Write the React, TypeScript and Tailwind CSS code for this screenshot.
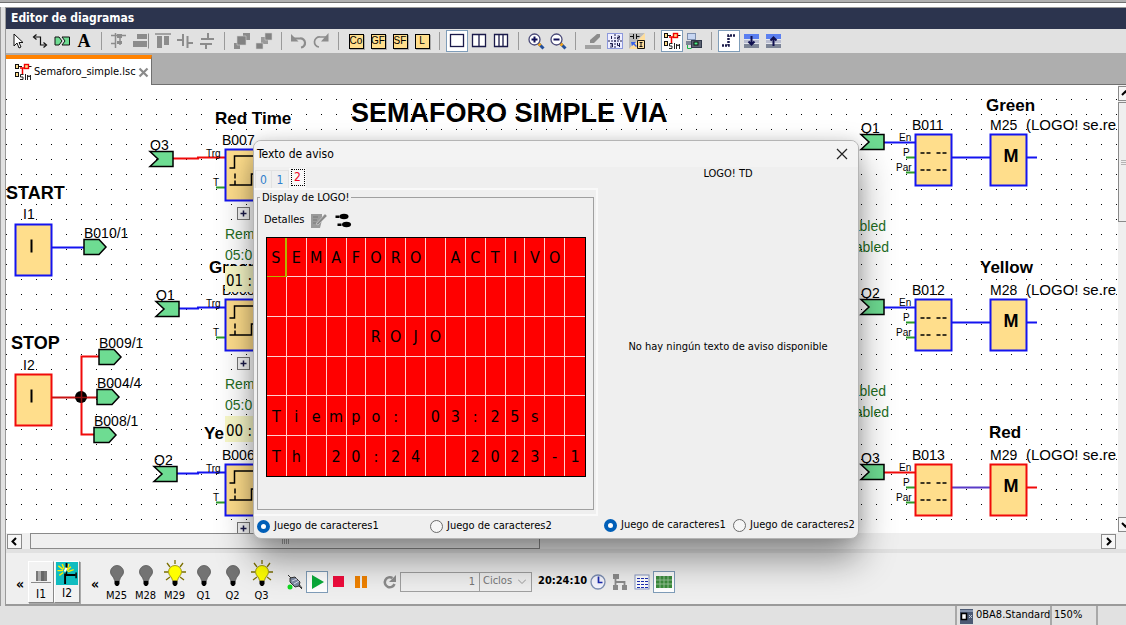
import type { ReactNode } from 'react';

const INK = '#1a1a4a';
const GREY = '#8c8c8c';

function Icon({ size = 18, children }: { size?: number; children: ReactNode }) {
  return (
    <svg width={size} height={size} viewBox={`0 0 ${size} ${size}`} fill="none" aria-hidden="true" className="shrink-0">
      {children}
    </svg>
  );
}

function Tool({ label, active = false, children }: { label: string; active?: boolean; children: ReactNode }) {
  return (
    <button
      type="button"
      aria-label={label}
      aria-pressed={active}
      className={
        active
          ? 'flex h-[22px] w-[22px] shrink-0 items-center justify-center border border-[#7f9db9] bg-white'
          : 'flex h-[22px] w-[22px] shrink-0 items-center justify-center'
      }
    >
      {children}
    </button>
  );
}

function Separator() {
  return (
    <div className="flex w-[13px] shrink-0 justify-center">
      <div className="h-[18px] w-px bg-[#9a9a9a]" />
    </div>
  );
}

function SimIcon() {
  return (
    <Icon>
      <path d="M5 3.500h3M14.500 3.500h3" stroke="#111" />
      <path d="M6 5h5M8.500 5v6" stroke="#f00000" strokeWidth="1.500" />
      <rect x="1.500" y="1.500" width="3" height="4" fill="#ffde8c" stroke="#111" />
      <rect x="10.500" y="1.500" width="4" height="4" fill="#ffde8c" stroke="#f00000" strokeWidth="1.400" />
      <rect x="1.500" y="9.500" width="3" height="4" fill="#ffde8c" stroke="#111" />
      <path d="M9.500 11.500H6.500v2.500h2.500v2.500H6M11.500 11v6M13.500 17v-5l1.500 2 1.500-2v5" stroke="#222" />
    </Icon>
  );
}

function LetterBox({ text }: { text: string }) {
  return (
    <span className="flex h-[15px] w-[15px] items-center justify-center border border-black bg-[#ffde8c] font-['Liberation_Sans',sans-serif] text-[10px] leading-none shadow-[1px_1px_0_#aaa]">
      {text}
    </span>
  );
}

function Arrange({ raised }: { raised: boolean }) {
  return (
    <Icon>
      {raised ? (
        <>
          <path d="M10 1h7v7h-7zM1 11h6v6H1z" fill={GREY} />
          <path d="M4 4h9v9H4z" fill="#828282" stroke="#d0d0d0" strokeWidth="0.600" />
        </>
      ) : (
        <>
          <path d="M6 5h7v7H6z" fill="#9a9a9a" />
          <path d="M10 1h7v7h-7zM1 11h7v6H1z" fill="#828282" stroke="#d0d0d0" strokeWidth="0.600" />
        </>
      )}
    </Icon>
  );
}

function Zoomer({ plus }: { plus: boolean }) {
  return (
    <Icon>
      <path d="M11.500 11.500l5 5" stroke="#24509a" strokeWidth="3" />
      <path d="M11 11l2.500 2.500" stroke="#f2a51c" strokeWidth="3" />
      <circle cx="7.500" cy="7.500" r="5.500" fill="#fff" stroke="#4a4a78" strokeWidth="1.300" />
      <path d={plus ? 'M4.500 7.500h6M7.500 4.500v6' : 'M4.500 7.500h6'} stroke="#101058" strokeWidth="2" />
    </Icon>
  );
}

function Transfer({ up }: { up: boolean }) {
  return (
    <Icon>
      <path d="M2 2h15v5H2z" fill="#5b7ff0" />
      <path d="M2 7h15v4H2z" fill="#b9bdd0" />
      <path d="M2 11h15v5H2z" fill="#7c8496" />
      <path d="M2 7.500h15M2 11.500h15" stroke="#e4e6ee" />
      <path d={up ? 'M9.500 14V6M6.500 8.500l3-3 3 3' : 'M9.500 4v8M6.500 9.500l3 3 3-3'} stroke="#101050" strokeWidth="2" />
    </Icon>
  );
}

function Toolbar() {
  return (
    <div role="toolbar" aria-label="Herramientas" className="flex h-6 items-center overflow-hidden bg-[#e1e1e1] pl-px">
      <Tool label="Seleccionar">
        <Icon><path d="M5 2v12l3-3 2 5 2-1-2-4.500h4z" fill="#fff" stroke="#111" /></Icon>
      </Tool>
      <Tool label="Conectar">
        <Icon>
          <path d="M3 5h6.500v8H15" stroke="#111" strokeWidth="1.200" />
          <path d="M5.500 2.500L2.500 5l3 2.500M12.500 10.500l3 2.500-3 2.500" stroke="#111" strokeWidth="1.200" />
        </Icon>
      </Tool>
      <Tool label="Conector">
        <Icon>
          <path d="M2 5h4l3 4-3 4H2z" fill="#6edc92" stroke="#111" />
          <path d="M9 5h7.500v8H9l3-4z" fill="#6edc92" stroke="#111" />
        </Icon>
      </Tool>
      <Tool label="Texto">
        <span className="font-['Liberation_Serif',serif] text-[18px] leading-none font-bold">A</span>
      </Tool>
      <Separator />
      <Tool label="Alinear">
        <Icon><path d="M5.500 1v15M1 3.500h5M1 11.500h5M5.500 3.500H16M10 3v10" stroke={GREY} strokeWidth="1.500" /><path d="M7 2h5v4H7zM7 9h5v3H7z" fill={GREY} /></Icon>
      </Tool>
      <Tool label="Alinear a la derecha">
        <Icon><path d="M5 2h10v5H5zM1 9h14v6H1z" fill={GREY} /><path d="M16.500 1.500v15" stroke={GREY} /></Icon>
      </Tool>
      <Tool label="Alinear arriba">
        <Icon><path d="M3 4h5v12H3zM10 4h5v9h-5z" fill={GREY} /><path d="M1 2h16" stroke={GREY} strokeWidth="1.500" /></Icon>
      </Tool>
      <Tool label="Distribuir horizontal">
        <Icon><path d="M7 2v12M11.500 4v12M1 8h6M11.500 11H17" stroke={GREY} strokeWidth="2" /></Icon>
      </Tool>
      <Tool label="Distribuir vertical">
        <Icon><path d="M3 7h13M2 12h12M10 1v6M8 12v5" stroke={GREY} strokeWidth="2" /></Icon>
      </Tool>
      <Separator />
      <Tool label="Traer al frente"><Arrange raised /></Tool>
      <Tool label="Enviar al fondo"><Arrange raised={false} /></Tool>
      <Separator />
      <Tool label="Deshacer">
        <Icon><path d="M4 6.500h6a4.500 4.500 0 0 1 1 9" stroke={GREY} strokeWidth="2.200" /><path d="M1 2v7.500h7.500z" fill={GREY} /></Icon>
      </Tool>
      <Tool label="Rehacer">
        <Icon><path d="M14 5H8a4.500 4.500 0 0 0-1 10" stroke={GREY} strokeWidth="1.700" /><path d="M16.500 1v8.500H9z" fill={GREY} /></Icon>
      </Tool>
      <Separator />
      <Tool label="Constantes"><LetterBox text="Co" /></Tool>
      <Tool label="Funciones generales"><LetterBox text="GF" /></Tool>
      <Tool label="Funciones especiales"><LetterBox text="SF" /></Tool>
      <Tool label="Registro"><LetterBox text="L" /></Tool>
      <Separator />
      <Tool label="Una ventana" active>
        <Icon><rect x="2.500" y="2.500" width="13" height="12" fill="#fff" stroke={INK} strokeWidth="1.300" /></Icon>
      </Tool>
      <Tool label="Dos ventanas">
        <Icon><path d="M2.500 2.500h13v12h-13zM9 2.500v12" fill="#fff" stroke={INK} strokeWidth="1.300" /></Icon>
      </Tool>
      <Tool label="Tres ventanas">
        <Icon><path d="M2.500 2.500h13v12h-13zM7 2.500v12M11 2.500v12" fill="#fff" stroke={INK} strokeWidth="1.300" /></Icon>
      </Tool>
      <Separator />
      <Tool label="Ampliar"><Zoomer plus /></Tool>
      <Tool label="Reducir"><Zoomer plus={false} /></Tool>
      <Separator />
      <Tool label="Color">
        <Icon><path d="M1 13h16v4H1z" fill="#a2a2a2" /><path d="M6 8l7-6h3v3l-6 6H6z" fill={GREY} /></Icon>
      </Tool>
      <Tool label="Dividir páginas">
        <Icon>
          <rect x="1.500" y="1.500" width="15" height="15" fill="#eef" stroke="#8c98dc" />
          <path d="M9 2v14M2 9h14" stroke={INK} strokeDasharray="2 1" />
          <path d="M5.500 4v3M11.500 4h2v1.500h-2V7h2.500M4 11.500h2.500V15H4M4.500 13H6M11.500 11v2.500H14M13.500 11v4" stroke={INK} />
        </Icon>
      </Tool>
      <Tool label="Convertir">
        <Icon>
          <path d="M1 1h16L1 17z" fill="#bbb" /><path d="M17 1v16H1z" fill="#ffde9c" />
          <path d="M2 4.500h3M5.500 2v5M8.500 2v5M8.500 4.500h3" stroke="#111" />
          <path d="M3 10h5L6.500 11.500 9 14l-1 1-2.500-2.500L4 14z" fill="#3a62e8" />
          <path d="M9.500 8.500h7v8h-7zM11.500 10.500h3M13 10.500v4M11.500 14.500h3" stroke="#111" />
        </Icon>
      </Tool>
      <Separator />
      <Tool label="Simulación" active><SimIcon /></Tool>
      <Tool label="Prueba online">
        <Icon>
          <rect x="2.500" y="1.500" width="8" height="6" fill="#c7d6f2" stroke="#7d8fae" />
          <path d="M1 9h6v4H1z" fill="#7d8494" />
          <rect x="6.500" y="8.500" width="10" height="7" fill="#5c6472" stroke="#30384a" />
          <rect x="9" y="10" width="4" height="3" fill="#4cf08a" stroke="#111" />
          <path d="M2.500 13v3.500h4" stroke="#1cb848" />
        </Icon>
      </Tool>
      <Separator />
      <Tool label="Líneas de conexión" active>
        <Icon><path d="M2 13.500h6.500v-10H16" stroke={INK} strokeWidth="2.500" strokeDasharray="2 1" /></Icon>
      </Tool>
      <Tool label="PC a LOGO!"><Transfer up={false} /></Tool>
      <Tool label="LOGO! a PC"><Transfer up /></Tool>
    </div>
  );
}

const BLUE = '#1414f0';
const RED = '#f00a0a';
const GREEN_TAG = '#6edc92';

function Block({ x, y, color, kind }: { x: number; y: number; color: string; kind: 'I' | 'M' | 'text' | 'pulse' }) {
  return (
    <g transform={`translate(${x} ${y})`}>
      <rect x="0" y="0" width="36" height="51" fill="#ffde8c" stroke={color} strokeWidth="2" />
      {kind === 'I' && <path d="M16 15v13" stroke="#000" strokeWidth="2" />}
      {kind === 'M' && <text x="13" y="27" fontSize="18" fontWeight="bold">M</text>}
      {kind === 'text' && <path d="M5 18.500h28M5 35.500h28" stroke="#000" strokeWidth="1.500" strokeDasharray="4 2 4 6 4 2 4 6" />}
      {kind === 'pulse' && (
        <path d="M4 18.500h5v-12h19M9.500 24v5M9.500 31v4.500M4 35.500h22v-11h6" stroke="#000" strokeWidth="1.500" fill="none" />
      )}
    </g>
  );
}

function InTag({ x, y }: { x: number; y: number }) {
  return <path d={`M${x} ${y}h23v15h-23l8 -7.500z`} fill={GREEN_TAG} stroke="#000" strokeWidth="1.500" />;
}

function OutTag({ x, y, label }: { x: number; y: number; label: string }) {
  return (
    <g>
      <path d={`M${x} ${y}h15l7 7.500l-7 7.500h-15z`} fill={GREEN_TAG} stroke="#000" strokeWidth="1.500" />
      <text x={x} y={y - 2} fontSize="14">{label}</text>
    </g>
  );
}

function Expander({ y }: { y: number }) {
  return (
    <g transform={`translate(237.500 ${y})`}>
      <rect width="12" height="12" fill="#f4f4f4" stroke="#777" />
      <path d="M3 6h6M6 3v6" stroke={INK} strokeWidth="1.500" />
    </g>
  );
}

const timers = [
  { name: 'B007', y: 149, pin: 'Q3', pinX: 150, wire: RED },
  { name: 'B008', y: 299, pin: 'Q1', pinX: 156, wire: BLUE },
  { name: 'B006', y: 464, pin: 'Q2', pinX: 154, wire: BLUE },
];

const outputs = [
  { title: 'Green', titleX: 986, titleY: 111, pin: 'Q1', block: 'B011', mark: 'M25', y: 134, wire: BLUE, frame: BLUE },
  { title: 'Yellow', titleX: 980, titleY: 273, pin: 'Q2', block: 'B012', mark: 'M28', y: 299, wire: BLUE, frame: BLUE },
  { title: 'Red', titleX: 989, titleY: 438, pin: 'Q3', block: 'B013', mark: 'M29', y: 464, wire: RED, frame: RED },
];

function Diagram() {
  return (
    <svg width="100%" height="448" className="block bg-white font-['Liberation_Sans',Arial,sans-serif]" role="img" aria-label="Diagrama del semáforo">
      <defs>
        <pattern id="dots" width="15" height="15" patternUnits="userSpaceOnUse">
          <rect x="0" y="14" width="1" height="1" fill="#000" />
        </pattern>
      </defs>
      <rect width="100%" height="100%" fill="url(#dots)" />
      <g transform="translate(-6 -85)">
        <text x="351" y="122" fontSize="27" fontWeight="bold">SEMAFORO SIMPLE VIA</text>
        <text x="215" y="124" fontSize="17" fontWeight="bold">Red Time</text>
        <text x="209" y="273" fontSize="17" fontWeight="bold">Green</text>
        <text x="204" y="439" fontSize="17" fontWeight="bold">Ye</text>

        <text x="6" y="199" fontSize="18" fontWeight="bold">START</text>
        <text x="23" y="219" fontSize="14">I1</text>
        <path d="M52 247.500h32" stroke={BLUE} strokeWidth="2" />
        <Block x={15.500} y={224.500} color={BLUE} kind="I" />
        <OutTag x={84} y={239.500} label="B010/1" />

        <text x="11" y="349" fontSize="18" fontWeight="bold">STOP</text>
        <text x="23" y="370" fontSize="14">I2</text>
        <path d="M52 397.500h45" stroke="#c81414" strokeWidth="2" />
        <path d="M99 356.500H81.500v78H94" stroke={RED} strokeWidth="2" fill="none" />
        <circle cx="81" cy="397" r="6" fill="#000" />
        <path d="M75 397.500h12M81.500 391v12" stroke="#901010" strokeWidth="1.500" />
        <Block x={15.500} y={374.500} color={RED} kind="I" />
        <OutTag x={99} y={349.500} label="B009/1" />
        <OutTag x={97} y={389.500} label="B004/4" />
        <OutTag x={94} y={427.500} label="B008/1" />

        {timers.map((t) => (
          <g key={t.name}>
            <text x={t.pinX} y={t.y + 1} fontSize="14">{t.pin}</text>
            <text x="222" y={t.y - 4} fontSize="14">{t.name}</text>
            <path d={`M${t.pinX + 23} ${t.y + 9.500}H198v-1h27`} stroke={t.wire} strokeWidth="2" fill="none" />
            <path d={`M216 ${t.y + 38.500}h9`} stroke="#2c9c2c" strokeWidth="2" />
            <InTag x={t.pinX} y={t.y + 2.500} />
            <text x="206" y={t.y + 8} fontSize="10">Trg</text>
            <text x="213" y={t.y + 37} fontSize="10">T</text>
            <Block x={225.500} y={t.y + 0.500} color={BLUE} kind="pulse" />
            <Expander y={t.y + 58.500} />
          </g>
        ))}
        <g fill="#1f6e1f" fontSize="14">
          <text x="225" y="239">Rem</text>
          <text x="225" y="260">05:0</text>
          <text x="225" y="389">Rem</text>
          <text x="225" y="410">05:0</text>
          <text x="886" y="231" textAnchor="end">abled</text>
          <text x="889" y="252" textAnchor="end">abled</text>
          <text x="886" y="396" textAnchor="end">abled</text>
          <text x="889" y="417" textAnchor="end">abled</text>
        </g>
        <rect x="225" y="266" width="60" height="26" fill="#f8f8c8" />
        <rect x="225" y="416" width="60" height="26" fill="#f8f8c8" />
        <g className="font-['DejaVu_Sans_Condensed','DejaVu_Sans',sans-serif]" fontSize="15">
          <text x="226" y="286">01 :</text>
          <text x="226" y="436">00 :</text>
        </g>

        {outputs.map((o) => (
          <g key={o.block}>
            <text x={o.titleX} y={o.titleY} fontSize="17" fontWeight="bold">{o.title}</text>
            <text x="861" y={o.y - 1} fontSize="14">{o.pin}</text>
            <text x="912" y={o.y - 4} fontSize="14">{o.block}</text>
            <text x="990" y={o.y - 4} fontSize="14">{o.mark}</text>
            <text x="1026" y={o.y - 4} fontSize="15">(LOGO! se.re</text>
            <path d={`M884 ${o.y + 8.500}h31`} stroke={o.wire} strokeWidth="2" />
            <path d={`M952 ${o.y + 23.500}h38`} stroke={o.wire === RED ? '#5a3cc8' : BLUE} strokeWidth="2" />
            <path d={`M1027 ${o.y + 23.500}h10`} stroke={o.wire} strokeWidth="2" />
            <path d={`M906 ${o.y + 23.500}h9M906 ${o.y + 38.500}h9`} stroke="#2c9c2c" strokeWidth="2" />
            <InTag x={861} y={o.y + 0.500} />
            <g fontSize="10">
              <text x="899" y={o.y + 7}>En</text>
              <text x="903" y={o.y + 22}>P</text>
              <text x="896" y={o.y + 37}>Par</text>
            </g>
            <Block x={915.500} y={o.y + 0.500} color={o.frame} kind="text" />
            <Block x={990.500} y={o.y + 0.500} color={o.frame} kind="M" />
          </g>
        ))}
      </g>
    </svg>
  );
}

function ScrollButton({ label, d }: { label: string; d: string }) {
  return (
    <button type="button" aria-label={label} className="flex h-[15px] w-[15px] shrink-0 items-center justify-center border border-[#8a8a8a] bg-[#f6f6f6]">
      <svg width="9" height="9" viewBox="0 0 9 9" fill="none" aria-hidden="true"><path d={d} stroke="#000" strokeWidth="2" /></svg>
    </button>
  );
}

function Radio({ name, label, checked = false }: { name: string; label: string; checked?: boolean }) {
  return (
    <label className="flex items-center gap-1 whitespace-nowrap">
      <input
        type="radio"
        name={name}
        defaultChecked={checked}
        className="h-[13px] w-[13px] shrink-0 appearance-none rounded-full border border-[#6b6b6b] bg-[#f6f6f6] checked:border-4 checked:border-[#005fb8] checked:bg-white"
      />
      {label}
    </label>
  );
}

const lcdRows = [
  'SEMAFORO ACTIVO ',
  '                ',
  '     ROJO       ',
  '                ',
  'Tiempo: 03:25s  ',
  'Th 20:24  2023-1',
];

function MessageDialog() {
  return (
    <section
      role="dialog"
      aria-label="Texto de aviso"
      className="absolute top-[140px] left-[253px] flex h-[399px] w-[606px] flex-col overflow-hidden rounded-lg border border-[#b4b4b4] bg-[#efefef] shadow-[0_20px_36px_0_rgba(0,0,0,0.42),0_0_14px_rgba(0,0,0,0.12)]"
    >
      <header className="flex h-[26px] shrink-0 items-center justify-between bg-[#f3f3f3] pr-2 pl-[3px]">
        <h2 className="text-[12px]">Texto de aviso</h2>
        <button type="button" aria-label="Cerrar" className="flex h-4 w-4 items-center justify-center">
          <svg width="12" height="12" viewBox="0 0 12 12" aria-hidden="true"><path d="M1 1l10 10M11 1L1 11" stroke="#222" strokeWidth="1.200" /></svg>
        </button>
      </header>
      <div className="flex min-h-0 flex-1">
        <div className="flex w-[344px] flex-col">
          <div role="tablist" className="flex h-[22px] items-end pl-px text-[12px] text-[#2f7fcc]">
            <button type="button" role="tab" className="h-[18px] w-[17px] border border-b-0 border-[#e2e2e2]">0</button>
            <button type="button" role="tab" className="h-[18px] w-[17px] border border-b-0 border-l-0 border-[#e2e2e2]">1</button>
            <button type="button" role="tab" aria-selected="true" className="flex h-5 w-[17px] items-start justify-center bg-[#f8f8f8] pt-px">
              <span className="flex h-[17px] w-[14px] items-center justify-center border border-dotted border-black leading-none text-[#f00020]">2</span>
            </button>
          </div>
          <div className="flex flex-1 flex-col border-2 border-l-0 border-[#f9f9f9] pr-[2px] pb-1 pl-[3px]">
            <fieldset className="flex h-[320px] w-full flex-col border border-[#a0a0a0] pl-[6px]">
              <legend className="-ml-1 px-[2px] leading-4">Display de LOGO!</legend>
              <div className="flex h-[31px] items-center pb-px">
                <span className="w-11">Detalles</span>
                <Icon size={20}>
                  <path d="M3 3h11v6l-2 8H3z" fill="#9a9a9a" />
                  <path d="M5 6h5M5 9h4M5 12h3" stroke="#777" />
                  <path d="M8 13l9-10 2 2-9 9z" fill="#8a8a8a" stroke="#ccc" strokeWidth="0.700" />
                </Icon>
                <span className="w-[6px]" />
                <Icon size={18}>
                  <ellipse cx="10" cy="4.500" rx="4.500" ry="2.700" fill="#000" /><path d="M1.500 3.500h4v2.500h-4z" fill="#000" />
                  <ellipse cx="12.500" cy="12.500" rx="4.500" ry="2.700" fill="#000" /><path d="M3.500 11.500h4V14h-4z" fill="#000" />
                </Icon>
              </div>
              <div className="ml-[2px] grid h-[240px] w-[320px] shrink-0 grid-cols-16 grid-rows-6 border border-black bg-[#ff0000] font-['DejaVu_Sans_Condensed','DejaVu_Sans',sans-serif] text-[16px] leading-none">
                {lcdRows.map((row, r) =>
                  row.split('').map((ch, c) => (
                    <span
                      key={`${r}-${c}`}
                      className={
                        r === 0 && c === 0
                          ? 'flex items-center justify-center border-r-2 border-b border-r-[#b4b400] border-b-[#b4b400] pt-[2px]'
                          : `flex items-center justify-center border-[#ffd0d0] pt-[2px] ${c < 15 ? 'border-r' : ''} ${r < 5 ? 'border-b' : ''}`
                      }
                    >
                      {ch}
                    </span>
                  )),
                )}
              </div>
            </fieldset>
          </div>
          <div className="flex h-6 items-center pb-px pl-[3px]">
            <div className="w-[173px]"><Radio name="logo-set" label="Juego de caracteres1" checked /></div>
            <Radio name="logo-set" label="Juego de caracteres2" />
          </div>
        </div>
        <div className="flex flex-1 flex-col">
          <h3 className="text-center leading-[14px]">LOGO! TD</h3>
          <p className="flex flex-1 items-center justify-center">No hay ningún texto de aviso disponible</p>
          <div className="flex h-6 items-center pb-px pl-[6px]">
            <div className="w-[129px]"><Radio name="td-set" label="Juego de caracteres1" checked /></div>
            <Radio name="td-set" label="Juego de caracteres2" />
          </div>
        </div>
      </div>
    </section>
  );
}

const lamps = [
  { name: 'M25', on: false },
  { name: 'M28', on: false },
  { name: 'M29', on: true },
  { name: 'Q1', on: false },
  { name: 'Q2', on: false },
  { name: 'Q3', on: true },
];

function Lamp({ name, on }: { name: string; on: boolean }) {
  return (
    <div className="flex w-[29px] flex-col items-center">
      <svg width="28" height="28" viewBox="0 0 28 28" fill="none" aria-hidden="true">
        {on && (
          <path d="M14 0v4M6 3l3 4M22 3l-3 4M3 12h4M21 12h4M5 20l4-3M23 20l-4-3" stroke="#7c7000" strokeWidth="1.300" />
        )}
        <path
          d="M14 5.500a6.500 6.500 0 0 1 6.500 6.500c0 3.500-3.500 4.500-4 8.500h-5c-.5-4-4-5-4-8.500A6.500 6.500 0 0 1 14 5.500z"
          fill={on ? '#ffff00' : '#737373'}
          stroke={on ? '#8a8000' : '#555'}
          strokeWidth="0.800"
        />
        <path d="M11.500 21h5v3l-1.500 2h-2l-1.500-2z" fill="#000" />
      </svg>
      <span className="leading-4">{name}</span>
    </div>
  );
}

function SimulationBar() {
  return (
    <div className="flex h-[53px] items-center border-b-2 border-[#9a9a9a] bg-[#efefef] pt-[6px] pl-[7px]">
      <button type="button" className="w-[14px] pt-1 text-[14px] leading-none font-bold" aria-label="Contraer entradas">«</button>
      <button type="button" className="ml-px flex h-[42px] w-[26px] flex-col items-center justify-between border border-white border-r-[#888] border-b-[#888] bg-[#f2f2f2] pt-2 shadow-[1px_1px_0_#aaa]">
        <svg width="20" height="14" viewBox="0 0 20 14" aria-hidden="true">
          <path d="M5 1h11v10H5z" fill="#777" /><path d="M7 1h3v10H7z" fill="#aaa" /><path d="M10 1h3v10h-3z" fill="#666" />
          <path d="M0 12h20v1H0z" fill="#888" />
        </svg>
        <span className="text-[12px] leading-[15px]">I1</span>
      </button>
      <button type="button" className="flex h-[42px] w-[26px] flex-col items-center justify-between border border-white border-r-[#888] border-b-[#888] bg-[#f2f2f2] shadow-[1px_1px_0_#aaa]">
        <svg width="22" height="24" viewBox="0 0 22 24" fill="none" className="bg-[#10bcc0]" aria-hidden="true">
          <path d="M2 4l5 4M1 9h6M3 14l4-3M6 2l2 5M15 5l-4 4M18 8l-6 2M13 2l-2 6" stroke="#ffee00" strokeWidth="1.500" />
          <path d="M10.500 1v5M9 12v11M10 13.500h10" stroke="#000" strokeWidth="2" />
          <path d="M20.500 11v6M10.500 10v4" stroke="#000" strokeWidth="1.500" />
          <path d="M10.500 6l-2 4" stroke="#fff" strokeWidth="2" />
        </svg>
        <span className="text-[12px] leading-[17px]">I2</span>
      </button>
      <button type="button" className="ml-2 w-[14px] pt-1 text-[14px] leading-none font-bold" aria-label="Contraer salidas">«</button>
      {lamps.map((lamp) => (
        <Lamp key={lamp.name} name={lamp.name} on={lamp.on} />
      ))}
      <div className="ml-2 flex items-center">
        <Tool label="Red">
          <Icon>
            <path d="M2 2l3 3M12 12l4 4M12 10l4 5" stroke="#333" />
            <path d="M4 5l5-1 5 5-1 4-4 1-5-5z" fill="#7e8ca4" stroke="#333" /><path d="M6 8l5-2M8 11l5-3" stroke="#dde" />
            <circle cx="4" cy="14" r="2.500" fill="#10dc20" />
          </Icon>
        </Tool>
        <Tool label="Iniciar" active><Icon><path d="M4 2l12 7-12 7z" fill="#0aac3a" /></Icon></Tool>
        <Tool label="Parar"><Icon><path d="M3 3h11v11H3z" fill="#f00c3c" /></Icon></Tool>
        <Tool label="Pausa"><Icon><path d="M3 3h5v12H3zM10 3h5v12h-5z" fill="#f08200" /></Icon></Tool>
      </div>
      <div className="ml-[6px] flex items-center">
        <Tool label="Repetir">
          <Icon><path d="M14.500 11a5 5 0 1 1-2-6" stroke={GREY} strokeWidth="2.500" /><path d="M16 2v7h-7z" fill={GREY} /></Icon>
        </Tool>
        <input aria-label="Número de ciclos" defaultValue="1" className="h-5 w-20 border border-[#a0a0a0] bg-transparent pr-1 text-right text-[#777]" />
        <div className="relative flex items-center">
          <select aria-label="Unidad" className="h-5 w-[52px] appearance-none border border-l-0 border-[#a0a0a0] bg-transparent pl-[3px] text-[#777]">
            <option>Ciclos</option>
          </select>
          <svg width="8" height="5" viewBox="0 0 8 5" fill="none" className="pointer-events-none absolute right-[6px]" aria-hidden="true"><path d="M0 .5l4 4 4-4" stroke="#999" /></svg>
        </div>
        <time className="w-[55px] pl-[6px] font-bold">20:24:10</time>
        <Tool label="Hora">
          <Icon><circle cx="9" cy="9" r="7" fill="#f6f6ff" stroke="#7d8fb4" strokeWidth="1.300" /><path d="M9.500 3.500v6h4" stroke="#1a2ab0" strokeWidth="1.700" /></Icon>
        </Tool>
        <Tool label="Topología">
          <Icon><path d="M2 1h6v5H2zM2 12h5v5H2zM11 12h5v5h-5z" fill={GREY} /><path d="M4.500 5v8M4.500 9h9v4" stroke={GREY} strokeWidth="1.800" /></Icon>
        </Tool>
        <Tool label="Tabla">
          <Icon><rect x="2" y="2" width="14" height="14" fill="#fff" stroke="#8a9ac4" /><path d="M4 5.500h11M4 8.500h11M4 11.500h11M4 14.500h11" stroke="#1c30b4" strokeDasharray="3 1" /></Icon>
        </Tool>
        <Tool label="Cuadrícula" active>
          <Icon><path d="M1 3h16v12H1z" fill="#3c8c3c" /><path d="M1 7h16M1 11h16M5 3v12M9 3v12M13 3v12" stroke="#a4cca4" strokeWidth="0.800" /></Icon>
        </Tool>
      </div>
    </div>
  );
}

export default function App() {
  return (
    <div className="relative flex min-h-screen flex-col overflow-hidden bg-[#e1e1e1] font-['DejaVu_Sans_Condensed','Noto_Sans',sans-serif] text-[11px] text-black">
      <div className="h-[3px] border-b border-[#707070] bg-[#b0b0b0]" />
      <div className="h-1 bg-white" />
      <div className="flex flex-1">
        <div className="w-[6px] shrink-0 border-r border-l border-[#9a9a9a] bg-[#e1e1e1]" />
        <main className="flex min-w-0 flex-1 flex-col">
          <h1 className="flex h-[22px] items-center border-t border-[#9a9a9a] bg-[#2c344e] pb-px pl-[5px] text-[12px] font-bold text-white">Editor de diagramas</h1>
          <Toolbar />
          <div className="flex h-8 items-end border-b border-[#707070] bg-[#aeaeae]">
            <div className="-mb-px flex h-[30px] items-center border-t-4 border-r border-t-[#ff8200] border-r-[#707070] bg-white pr-[2px] pl-2">
              <SimIcon />
              <span className="ml-[2px]">Semaforo_simple.lsc</span>
              <button type="button" aria-label="Cerrar pestaña" className="ml-[2px]">
                <svg width="11" height="11" viewBox="0 0 11 11" aria-hidden="true"><path d="M1.500 1.500l8 8M9.500 1.500l-8 8" stroke="#8a8a8a" strokeWidth="2.200" /></svg>
              </button>
            </div>
          </div>
          <div className="flex">
            <div className="min-w-0 flex-1 overflow-hidden"><Diagram /></div>
            <div className="flex w-2 shrink-0 flex-col overflow-hidden bg-[#efefef] pt-px pb-px">
              <ScrollButton label="Subir" d="M1 6l3.500-3.500L8 6" />
              <div className="mt-px flex h-[120px] w-[15px] flex-col items-end justify-center gap-px border border-[#8a8a8a] bg-[#efefef] pr-[2px]">
                <i className="h-px w-[9px] bg-[#b4b4b4]" />
                <i className="h-px w-[9px] bg-[#b4b4b4]" />
                <i className="h-px w-[9px] bg-[#b4b4b4]" />
              </div>
              <div className="flex-1" />
              <ScrollButton label="Bajar" d="M1 3l3.500 3.500L8 3" />
            </div>
          </div>
          <div className="flex h-4 items-center gap-2 bg-[#efefef] pr-[10px] pl-px">
            <ScrollButton label="Izquierda" d="M6 1L2.500 4.500 6 8" />
            <div className="flex h-4 w-[46%] items-center justify-center gap-px border border-[#8a8a8a] bg-[#efefef]">
              <i className="h-[6px] w-px bg-[#a0a0a0]" />
              <i className="h-[6px] w-px bg-[#a0a0a0]" />
              <i className="h-[6px] w-px bg-[#a0a0a0]" />
              <i className="h-[6px] w-px bg-[#a0a0a0]" />
            </div>
            <div className="flex-1" />
            <ScrollButton label="Derecha" d="M3 1l3.500 3.500L3 8" />
          </div>
          <div className="h-1 bg-[#e1e1e1]" />
          <SimulationBar />
        </main>
      </div>
      <footer className="flex h-[19px] justify-end">
        <div className="flex w-[95px] items-center border-l-2 border-[#a8a8a8] pl-px whitespace-nowrap">
          <Icon size={16}>
            <path d="M2 1h13v15H2z" fill="#4c5a74" /><path d="M2 2h13v2H2z" fill="#8593ac" />
            <rect x="3.500" y="5.500" width="5" height="6" fill="#fff" stroke="#000" strokeWidth="1.500" />
            <path d="M11 7l3 3M14 7l-3 3" stroke="#c0c8d8" />
          </Icon>
          <span className="ml-[2px]">0BA8.Standard</span>
        </div>
        <div className="flex w-[46px] items-center border-l-2 border-[#a8a8a8] pl-[2px]">150%</div>
        <div className="w-[30px] border-l-2 border-[#a8a8a8]" />
      </footer>
      <MessageDialog />
    </div>
  );
}
